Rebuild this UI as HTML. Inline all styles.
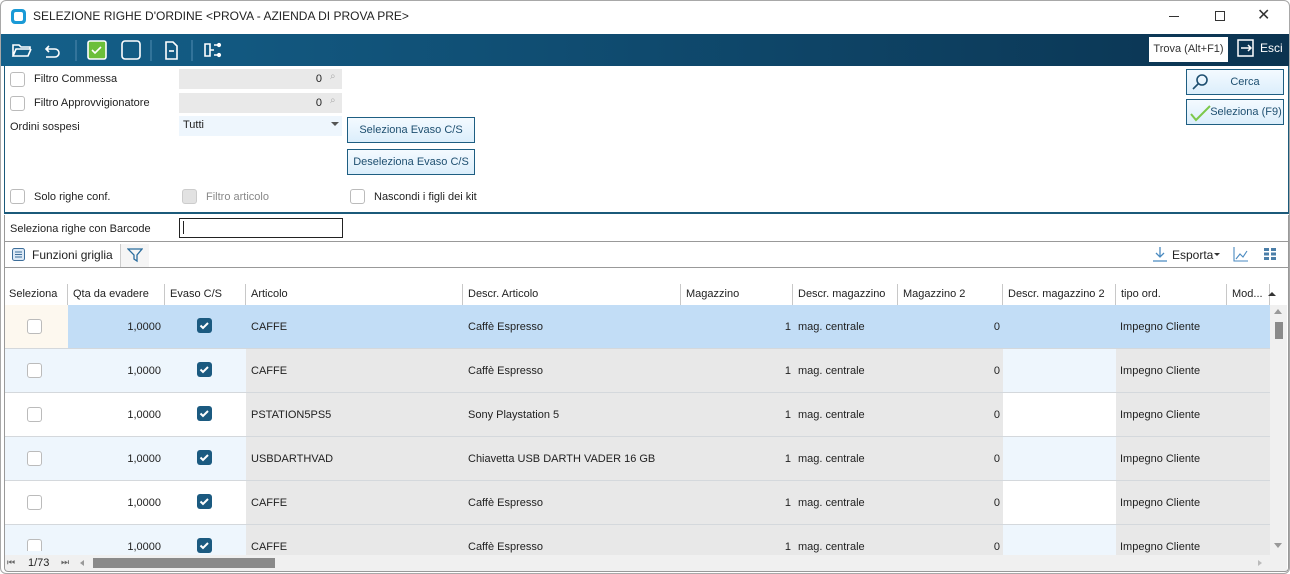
<!DOCTYPE html>
<html><head><meta charset="utf-8"><style>
*{box-sizing:border-box;margin:0;padding:0}
body{width:1290px;height:574px;overflow:hidden;background:#fff;font-family:"Liberation Sans",sans-serif;font-size:11px;color:#222;position:relative}
.a{position:absolute}
.cb{position:absolute;width:15px;height:15px;border:1px solid #bbb;border-radius:3px;background:#fff}
.chk{position:absolute;width:15px;height:15px;border-radius:3px;background:#1b5a80}
.btn{position:absolute;border:1px solid #1e5e82;background:linear-gradient(#f4faff,#dbeefb);color:#1e4f70;text-align:center;font-size:11px}
.hd{position:absolute;top:284px;height:21px;border-right:1px solid #c8c8c8;line-height:20px;padding-left:5px;font-size:11px;background:#fff}
.c{position:absolute;height:44px;line-height:44px;font-size:11px;border-bottom:1px solid #d4d8dc;white-space:nowrap;overflow:hidden}
</style></head><body>
<!-- title -->
<div class="a" style="left:11px;top:9px;width:15px;height:15px;background:#1a9ad6;border-radius:4px"></div>
<div class="a" style="left:14px;top:12px;width:9px;height:9px;background:#fff;border-radius:2px"></div>
<div class="a" style="left:33px;top:9px;font-size:12px;color:#222">SELEZIONE RIGHE D'ORDINE &lt;PROVA - AZIENDA DI PROVA PRE&gt;</div>
<div class="a" style="left:1169px;top:16px;width:10px;height:1px;background:#333"></div>
<div class="a" style="left:1215px;top:11px;width:10px;height:10px;border:1px solid #333"></div>
<div class="a" style="left:1257px;top:5px;font-size:16px;color:#333">✕</div>
<!-- toolbar -->
<div class="a" style="left:1px;top:34px;width:1288px;height:32px;background:linear-gradient(90deg,#14608a,#0f4a6e 50%,#0b3350)"></div>
<svg class="a" style="left:0;top:34px" width="240" height="32" fill="none" stroke="#fff" stroke-width="1.6">
<path d="M13 22V11h6l2 2h9v2H16l-3 7h15l3-7"/>
<path d="M49 12l-3 3 3 3M46 15h9a4 4 0 0 1 0 8h-9"/>
<line x1="76" y1="6" x2="76" y2="27" stroke="#3b7aa0"/>
<rect x="88" y="7" width="18" height="18" rx="2" fill="#6cbf3a" stroke="#fff"/>
<path d="M92 16l3 3 6-6" stroke="#fff"/>
<rect x="122" y="7" width="18" height="18" rx="3"/>
<line x1="151" y1="6" x2="151" y2="27" stroke="#3b7aa0"/>
<path d="M166 8h7l4 4v13h-11z"/><path d="M169 17h5"/>
<line x1="192" y1="6" x2="192" y2="27" stroke="#3b7aa0"/>
<path d="M205 10h5v12h-5zM210 16h4M214 11h3M214 21h3"/><circle cx="219" cy="11" r="1.3" fill="#fff"/><circle cx="219" cy="21" r="1.3" fill="#fff"/>
</svg>
<div class="a" style="left:1149px;top:37px;width:79px;height:25px;background:#fff;line-height:25px;text-align:center;font-size:11px;color:#333">Trova (Alt+F1)</div>
<svg class="a" style="left:1236px;top:38px" width="20" height="20" fill="none" stroke="#fff" stroke-width="1.5"><path d="M7 2H2v16h5M7 2h10v16H7"/><path d="M5 10h10M12 7l3 3-3 3"/></svg>
<div class="a" style="left:1260px;top:41px;color:#fff;font-size:12px">Esci</div>
<!-- form -->
<div class="a" style="left:4px;top:66px;width:1285px;height:148px;border-left:1px solid #1b5a7a;border-right:1px solid #1b5a7a;border-bottom:2px solid #1b5a7a"></div>
<div class="cb" style="left:10px;top:72px"></div><div class="a" style="left:34px;top:73px">Filtro Commessa</div>
<div class="a" style="left:179px;top:69px;width:163px;height:20px;background:#e9e9e9;text-align:right;padding-right:20px;line-height:20px">0</div>
<div class="a" style="left:330px;top:71px;color:#aaa;font-size:10px">⌕</div>
<div class="cb" style="left:10px;top:96px"></div><div class="a" style="left:34px;top:97px">Filtro Approvvigionatore</div>
<div class="a" style="left:179px;top:93px;width:163px;height:20px;background:#e9e9e9;text-align:right;padding-right:20px;line-height:20px">0</div>
<div class="a" style="left:330px;top:95px;color:#aaa;font-size:10px">⌕</div>
<div class="a" style="left:10px;top:121px">Ordini sospesi</div>
<div class="a" style="left:179px;top:116px;width:163px;height:20px;background:#eef6fd;padding-left:4px;line-height:19px">Tutti</div>
<div class="a" style="left:331px;top:122px;border:4px solid transparent;border-top:4px solid #555"></div>
<div class="btn" style="left:347px;top:117px;width:128px;height:26px;line-height:24px">Seleziona Evaso C/S</div>
<div class="btn" style="left:347px;top:149px;width:128px;height:26px;line-height:24px">Deseleziona Evaso C/S</div>
<div class="cb" style="left:10px;top:189px"></div><div class="a" style="left:34px;top:191px">Solo righe conf.</div>
<div class="cb" style="left:182px;top:189px;background:#e2e2e2;border-color:#ccc"></div><div class="a" style="left:206px;top:191px;color:#888">Filtro articolo</div>
<div class="cb" style="left:350px;top:189px"></div><div class="a" style="left:374px;top:191px">Nascondi i figli dei kit</div>
<div class="btn" style="left:1186px;top:69px;width:98px;height:26px;line-height:24px;padding-left:20px">Cerca</div>
<svg class="a" style="left:1191px;top:73px" width="20" height="18" fill="none" stroke="#1e4f70" stroke-width="1.6"><circle cx="11" cy="7" r="5"/><path d="M7 11l-5 5"/></svg>
<div class="btn" style="left:1186px;top:99px;width:98px;height:26px;line-height:24px;padding-left:22px">Seleziona (F9)</div>
<svg class="a" style="left:1189px;top:103px" width="24" height="20" fill="none" stroke="#7cc84a" stroke-width="2"><path d="M2 11l5 6L21 3"/></svg>
<!-- barcode -->
<div class="a" style="left:4px;top:215px;width:1285px;height:27px;border-left:1px solid #999;border-right:1px solid #999;border-bottom:1px solid #999"></div>
<div class="a" style="left:10px;top:223px">Seleziona righe con Barcode</div>
<div class="a" style="left:179px;top:218px;width:164px;height:20px;border:1px solid #222"></div>
<div class="a" style="left:183px;top:221px;width:1px;height:13px;background:#222"></div>
<!-- grid toolbar -->
<div class="a" style="left:4px;top:242px;width:1285px;height:26px;border-left:1px solid #999;border-right:1px solid #999;border-bottom:1px solid #999"></div>
<svg class="a" style="left:11px;top:247px" width="16" height="16" fill="none" stroke="#3d6e9a"><rect x="1.5" y="1.5" width="12" height="12" rx="2" fill="#dce9f6"/><path d="M4 5h7M4 7.5h7M4 10h7"/></svg>
<div class="a" style="left:32px;top:248px;font-size:12px">Funzioni griglia</div>
<div class="a" style="left:120px;top:244px;width:29px;height:23px;border-left:1px solid #ccc;background:#f5f5f5"></div>
<svg class="a" style="left:127px;top:247px" width="16" height="16" fill="none" stroke="#2a6d9e" stroke-width="1.3"><path d="M1 2h14l-5 6v6l-3-2V8z"/></svg>
<svg class="a" style="left:1152px;top:246px" width="16" height="16" fill="none" stroke="#4a8ac0" stroke-width="1.3"><path d="M8 1v10M4 7l4 4 4-4M1 15h14"/></svg>
<div class="a" style="left:1172px;top:248px;font-size:12px">Esporta</div>
<div class="a" style="left:1214px;top:253px;border:3px solid transparent;border-top:3px solid #333"></div>
<svg class="a" style="left:1233px;top:246px" width="16" height="16" fill="none" stroke="#4a8ac0" stroke-width="1.1"><path d="M1 1v14h14M3 13l4-5 3 3 4-6"/></svg>
<svg class="a" style="left:1264px;top:248px" width="12" height="12" fill="#4a7ea8"><rect x="0" y="0" width="5" height="3"/><rect x="7" y="0" width="5" height="3"/><rect x="0" y="4.5" width="5" height="3"/><rect x="7" y="4.5" width="5" height="3"/><rect x="0" y="9" width="5" height="3"/><rect x="7" y="9" width="5" height="3"/></svg>
<!-- grid -->
<div class="a" style="left:4px;top:284px;width:1266px;height:21px;border-top:1px solid #c8c8c8;border-bottom:1px solid #c8c8c8;background:#fff"></div>
<div class="hd" style="left:4px;width:64px">Seleziona</div>
<div class="hd" style="left:68px;width:97px">Qta da evadere</div>
<div class="hd" style="left:165px;width:81px">Evaso C/S</div>
<div class="hd" style="left:246px;width:217px">Articolo</div>
<div class="hd" style="left:463px;width:218px">Descr. Articolo</div>
<div class="hd" style="left:681px;width:112px">Magazzino</div>
<div class="hd" style="left:793px;width:105px">Descr. magazzino</div>
<div class="hd" style="left:898px;width:105px">Magazzino 2</div>
<div class="hd" style="left:1003px;width:113px">Descr. magazzino 2</div>
<div class="hd" style="left:1116px;width:111px">tipo ord.</div>
<div class="hd" style="left:1227px;width:43px">Mod...<span style="position:absolute;left:41px;top:8px;border:4px solid transparent;border-bottom:4px solid #333;border-top:0"></span></div>
<div id="rows"></div>
<!-- scrollbars -->
<div class="a" style="left:1270px;top:305px;width:17px;height:250px;background:#f0f0f0"></div>
<div class="a" style="left:1274px;top:309px;border:4px solid transparent;border-bottom:5px solid #999;border-top:0"></div>
<div class="a" style="left:1275px;top:322px;width:8px;height:17px;background:#8a8a8a"></div>
<div class="a" style="left:1274px;top:543px;border:4px solid transparent;border-top:5px solid #999;border-bottom:0"></div>
<div class="a" style="left:5px;top:555px;width:1282px;height:16px;background:#f0f0f0"></div>
<div class="a" style="left:7px;top:557px;font-size:9px;color:#666">⏮</div>
<div class="a" style="left:28px;top:557px;font-size:11px">1/73</div>
<div class="a" style="left:61px;top:557px;font-size:9px;color:#666">⏭</div>
<div class="a" style="left:80px;top:560px;border:3px solid transparent;border-right:4px solid #999;border-left:0"></div>
<div class="a" style="left:93px;top:558px;width:182px;height:10px;background:#8a8a8a"></div>
<div class="a" style="left:1258px;top:560px;border:3px solid transparent;border-left:4px solid #bbb;border-right:0"></div>
<div class="a" style="left:4px;top:268px;width:1285px;height:304px;border-left:1px solid #999;border-right:1px solid #999;border-bottom:1px solid #999;border-radius:0 0 4px 4px"></div>
<div class="a" style="left:0;top:0;width:1290px;height:574px;border:1px solid #a8a8a8;border-radius:6px"></div>
<script>
var data=[["CAFFE","Caffè Espresso"],["CAFFE","Caffè Espresso"],["PSTATION5PS5","Sony Playstation 5"],["USBDARTHVAD","Chiavetta USB DARTH VADER 16 GB"],["CAFFE","Caffè Espresso"],["CAFFE","Caffè Espresso"]];
var h="";
data.forEach(function(d,i){
 var y=305+i*44,sel=i==0,alt=(i%2==1)?"#eef6fd":"#fff",g="#e8e8e8";
 function c(l,w,bg,txt,st){h+='<div class="c" style="left:'+l+'px;top:'+y+'px;width:'+w+'px;background:'+bg+';'+(st||'')+(i==5?'height:30px;border-bottom:0;':'')+'">'+txt+'</div>';}
 var s=sel?"#c2ddf6":null;
 c(4,64,sel?"#fdf8ef":alt,"");
 c(68,97,s||alt,"1,0000","text-align:right;padding-right:4px;");
 c(165,81,s||alt,"");
 c(246,217,s||g,d[0],"padding-left:5px;");
 c(463,218,s||g,d[1],"padding-left:5px;");
 c(681,112,s||g,"1","text-align:right;padding-right:2px;");
 c(793,105,s||g,"mag. centrale","padding-left:5px;");
 c(898,105,s||g,"0","text-align:right;padding-right:3px;");
 c(1003,113,s||alt,"");
 c(1116,111,s||g,"Impegno Cliente","padding-left:4px;");
 c(1227,43,s||g,"");
 h+='<div class="cb" style="left:27px;top:'+(y+14)+'px;'+(i==5?'height:12px;border-bottom:0;border-radius:3px 3px 0 0':'')+'"></div>';
 h+='<div class="chk" style="left:197px;top:'+(y+13)+'px"><svg width="15" height="15" fill="none" stroke="#fff" stroke-width="2"><path d="M3.5 7.5l2.5 2.5 5-5"/></svg></div>';
});
document.getElementById("rows").innerHTML=h;
</script>
</body></html>
